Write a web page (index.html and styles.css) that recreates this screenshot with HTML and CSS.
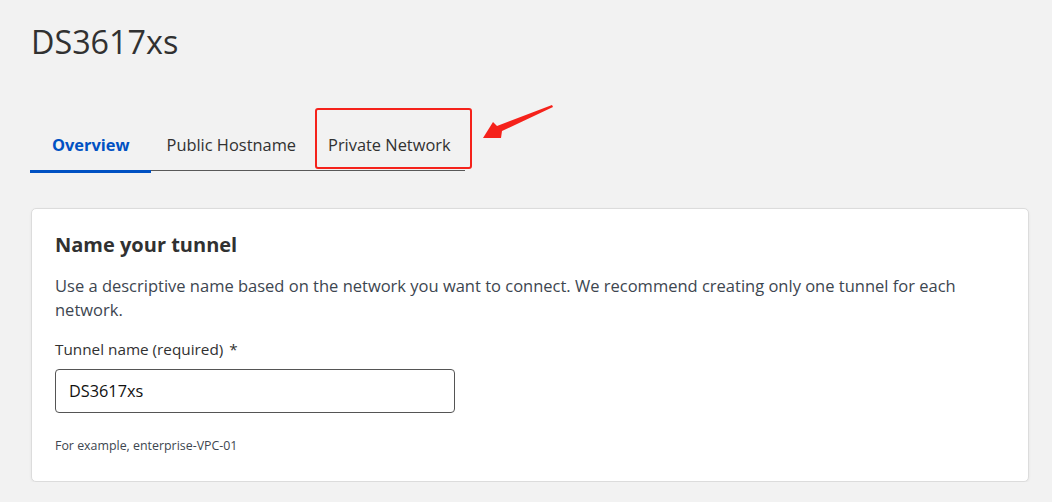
FILE: index.html
```
<!DOCTYPE html>
<html>
<head>
<meta charset="utf-8">
<link rel="stylesheet" href="styles.css">
</head>
<body>
<div class="page">
  <h1 class="title">DS3617xs</h1>
  <div class="tabs-wrap">
    <nav class="tabs">
      <a class="tab active">Overview</a>
      <a class="tab">Public Hostname</a>
      <a class="tab">Private Network</a>
    </nav>
    <div class="highlight"></div>
    <svg class="arrow" width="80" height="40" viewBox="0 0 80 40">
      <polygon points="72,2 73,4 22,28 21,35 3,35 13,19 17,23" fill="#f5221b"/>
    </svg>
  </div>
  <section class="card">
    <h2 class="card-title">Name your tunnel</h2>
    <p class="card-desc">Use a descriptive name based on the network you want to connect. We recommend creating only one tunnel for each network.</p>
    <label class="field-label">Tunnel name (required) <span class="req">*</span></label>
    <div class="input">DS3617xs</div>
    <p class="hint">For example, enterprise-VPC-01</p>
  </section>
</div>
</body>
</html>
```
FILE: styles.css
```
html, body {
  margin: 0;
  padding: 0;
  background: #f2f2f2;
}
body {
  font-family: "Open Sans", "Noto Sans", sans-serif;
  color: #313131;
}
.page {
  padding: 21px 23px 0 31px;
}
.title {
  margin: 0;
  font-size: 32.3px;
  line-height: 40px;
  font-weight: 400;
  color: #313131;
}
.tabs-wrap {
  position: relative;
  margin-top: 59px;
  margin-left: -1px;
  width: fit-content;
}
.tabs {
  display: flex;
  border-bottom: 1px solid #595959;
  height: 50px;
  align-items: stretch;
  white-space: nowrap;
}
.tab {
  display: flex;
  align-items: center;
  flex-shrink: 0;
  padding: 0 16px 2px;
  font-size: 16.4px;
  color: #313131;
  margin-bottom: -1px;
  border-bottom: 3px solid transparent;
  box-sizing: border-box;
  height: 53px;
}
.tab:last-child {
  padding-right: 14px;
}
.tab.active {
  padding-left: 22px;
  padding-right: 21px;
  color: #0051c3;
  font-weight: 700;
  border-bottom-color: #0051c3;
}
.highlight {
  position: absolute;
  left: 285px;
  top: -12px;
  width: 153px;
  height: 57px;
  border: 2px solid #f5221b;
  border-radius: 3px;
}
.arrow {
  position: absolute;
  left: 450px;
  top: -17px;
}
.card {
  margin-top: 37px;
  background: #fff;
  border: 1px solid #dcdcdc;
  border-radius: 5px;
  box-shadow: 0 1px 3px rgba(0,0,0,0.06);
  padding: 22px 24px 26px 23px;
}
.card-title {
  margin: 0;
  font-size: 20px;
  line-height: 28px;
  font-weight: 700;
  color: #313131;
}
.card-desc {
  margin: 15px 0 0;
  font-size: 16.5px;
  line-height: 24px;
  color: #3d4650;
}
.field-label {
  display: block;
  margin-top: 15px;
  font-size: 15.3px;
  line-height: 24px;
  color: #313131;
}
.req {
  color: #313131;
  margin-left: 2px;
}
.input {
  margin-top: 8px;
  width: 400px;
  height: 44px;
  box-sizing: border-box;
  border: 1px solid #555;
  border-radius: 4px;
  padding: 0 13px;
  display: flex;
  align-items: center;
  font-size: 16.3px;
  color: #111;
}
.hint {
  margin: 24px 0 0;
  font-size: 12.4px;
  line-height: 18px;
  color: #3d4650;
}
```
